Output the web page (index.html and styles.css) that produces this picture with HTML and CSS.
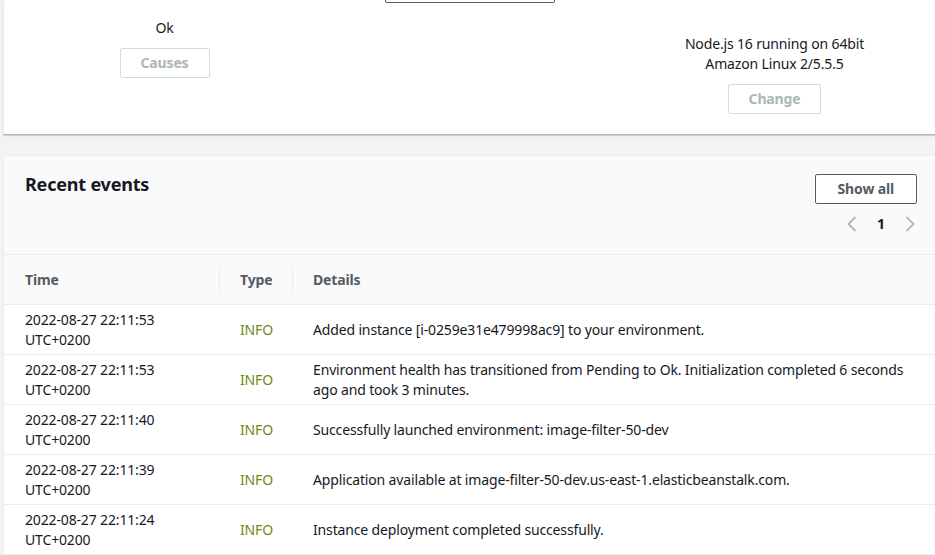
FILE: index.html
```html
<!DOCTYPE html>
<html lang="en">
<head>
<meta charset="utf-8">
<title>Environment</title>
<link rel="stylesheet" href="styles.css">
</head>
<body>
<div class="page">
  <section class="overview">
    <div class="ov-col ov-health">
      <div class="ov-value">Ok</div>
      <button class="btn btn-disabled" disabled>Causes</button>
    </div>
    <div class="ov-col ov-middle">
      <button class="btn btn-cut" aria-label="Upload and deploy"></button>
    </div>
    <div class="ov-col ov-platform">
      <div class="ov-value">Node.js 16 running on 64bit<br>Amazon Linux 2/5.5.5</div>
      <button class="btn btn-disabled" disabled>Change</button>
    </div>
  </section>

  <section class="events">
    <header class="events-head">
      <h2 class="events-title">Recent events</h2>
      <div class="events-actions">
        <button class="btn btn-normal">Show all</button>
        <div class="pager">
          <span class="pager-arrow"><svg width="12" height="18" viewBox="0 0 12 18"><path d="M9.5 2 L2.5 9 L9.5 16" fill="none" stroke="#aab7b8" stroke-width="1.8"/></svg></span>
          <span class="pager-num">1</span>
          <span class="pager-arrow"><svg width="12" height="18" viewBox="0 0 12 18"><path d="M2.5 2 L9.5 9 L2.5 16" fill="none" stroke="#aab7b8" stroke-width="1.8"/></svg></span>
        </div>
      </div>
    </header>
    <table class="events-table">
      <colgroup>
        <col class="c-time">
        <col class="c-type">
        <col class="c-details">
      </colgroup>
      <thead>
        <tr>
          <th class="col-time">Time</th>
          <th class="col-type"><span class="sep"></span>Type</th>
          <th class="col-details"><span class="sep"></span>Details</th>
        </tr>
      </thead>
      <tbody>
        <tr>
          <td>2022-08-27 22:11:53<br>UTC+0200</td>
          <td class="info">INFO</td>
          <td>Added instance [i-0259e31e479998ac9] to your environment.</td>
        </tr>
        <tr>
          <td>2022-08-27 22:11:53<br>UTC+0200</td>
          <td class="info">INFO</td>
          <td><span class="detail-wrap">Environment health has transitioned from Pending to Ok. Initialization completed 6 seconds ago and took 3 minutes.</span></td>
        </tr>
        <tr>
          <td>2022-08-27 22:11:40<br>UTC+0200</td>
          <td class="info">INFO</td>
          <td>Successfully launched environment: image-filter-50-dev</td>
        </tr>
        <tr>
          <td>2022-08-27 22:11:39<br>UTC+0200</td>
          <td class="info">INFO</td>
          <td>Application available at image-filter-50-dev.us-east-1.elasticbeanstalk.com.</td>
        </tr>
        <tr>
          <td>2022-08-27 22:11:24<br>UTC+0200</td>
          <td class="info">INFO</td>
          <td>Instance deployment completed successfully.</td>
        </tr>
      </tbody>
    </table>
  </section>
</div>
</body>
</html>
```

FILE: styles.css
```css
* { box-sizing: border-box; }

html, body {
  margin: 0;
  padding: 0;
  background: #f2f3f3;
  font-family: "Noto Sans", "Open Sans", Arial, sans-serif;
  font-size: 14px;
  line-height: 20px;
  letter-spacing: -0.15px;
  color: #16191f;
  overflow: hidden;
}

.page {
  width: 935px;
  height: 555px;
  padding-left: 3px;
}

/* top overview card */
.overview {
  height: 135px;
  background: #ffffff;
  border-left: 1px solid #eaeded;
  border-bottom: 1px solid #aab7b8;
  box-shadow: 0 1px 1px 0 rgba(0, 28, 36, 0.15);
  display: grid;
  grid-template-columns: 305px 305px 305px;
  padding-left: 8px;
}

.ov-col {
  display: flex;
  flex-direction: column;
  align-items: center;
  text-align: center;
}

.ov-health { padding-top: 18px; gap: 10px; }
.ov-middle { padding-top: 0; }
.ov-platform { padding-top: 34px; gap: 10px; }

.btn {
  font-family: inherit;
  font-size: 14px;
  font-weight: 700;
  line-height: 20px;
  letter-spacing: -0.15px;
  border-radius: 2px;
  padding: 4px 20px;
  background: #ffffff;
  height: 30px;
}

.btn-disabled {
  color: #aab7b8;
  border: 1px solid #d5dbdb;
}

.btn-normal {
  color: #545b64;
  border: 1px solid #545b64;
  padding: 4px 22px;
}

.btn-cut {
  width: 170px;
  margin-top: -27px;
  color: #545b64;
  border: 1px solid #545b64;
}

/* events card */
.events {
  margin-top: 20px;
  background: #fafafa;
  border-left: 1px solid #eaeded;
  border-top: 1px solid #eaeded;
}

.events-head {
  height: 99px;
  display: flex;
  justify-content: space-between;
  align-items: flex-start;
  padding: 17px 18px 0 21px;
  border-bottom: 1px solid #eaeded;
}

.events-title {
  margin: 0;
  font-size: 18px;
  line-height: 22px;
  font-weight: 700;
  color: #16191f;
  letter-spacing: -0.2px;
}

.events-actions {
  display: flex;
  flex-direction: column;
  align-items: flex-end;
  padding-top: 1px;
}

.pager {
  display: flex;
  align-items: center;
  gap: 18px;
  margin-top: 10px;
}

.pager-arrow {
  display: flex;
  width: 14px;
  justify-content: center;
}

.pager-num {
  font-weight: 700;
  width: 8px;
  text-align: center;
}

.events-table {
  width: 100%;
  border-collapse: collapse;
  table-layout: fixed;
}

.c-time { width: 215px; }
.c-type { width: 73px; }

.events-table th {
  position: relative;
  text-align: left;
  font-weight: 700;
  color: #545b64;
  height: 49px;
  padding: 2px 0 0 21px;
  border-bottom: 1px solid #eaeded;
  background: #fafafa;
}

.sep {
  position: absolute;
  left: 0;
  top: 13px;
  height: 24px;
  border-left: 1px solid #eaeded;
}

.events-table td {
  background: #ffffff;
  height: 50px;
  padding: 5px 20px 4px 21px;
  border-bottom: 1px solid #eaeded;
  vertical-align: middle;
}

.info { color: #6b8a17; }

.detail-wrap {
  display: block;
  max-width: 600px;
}
```
